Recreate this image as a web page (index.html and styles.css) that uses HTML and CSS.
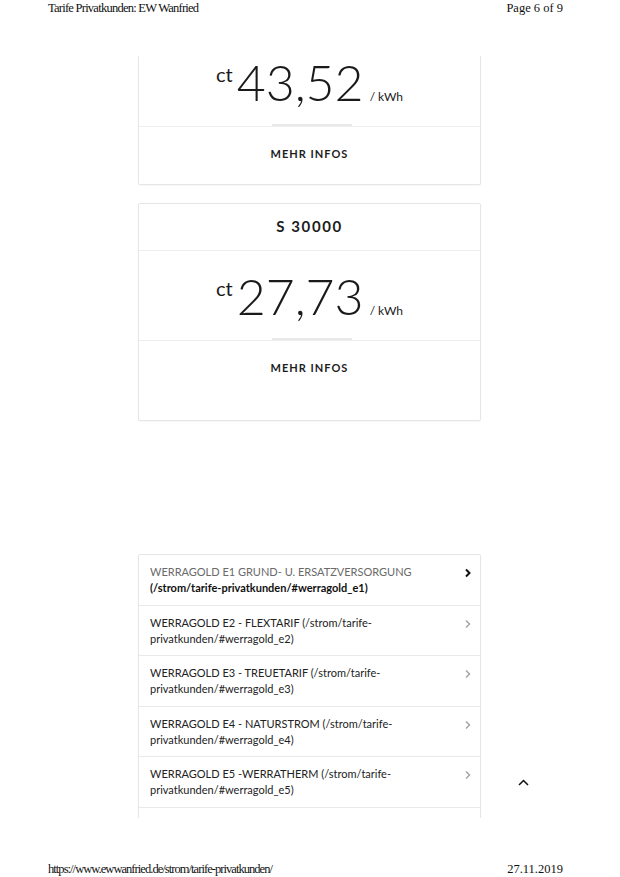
FILE: index.html
```html
<!DOCTYPE html>
<html lang="de">
<head>
<meta charset="utf-8">
<title>Tarife Privatkunden: EW Wanfried</title>
<link rel="stylesheet" href="styles.css">
</head>
<body>
<div class="sheet">
  <header class="print-head">
    <span class="narrow">Tarife Privatkunden: EW Wanfried</span>
    <span>Page 6 of 9</span>
  </header>

  <main class="content">
    <section class="card card-cut">
      <div class="price price-cut">
        <span class="cur">ct</span><span class="num">43,52</span><span class="unit">/ kWh</span>
      </div>
      <div class="more more-short">MEHR INFOS</div>
    </section>

    <section class="card">
      <div class="title">S 30000</div>
      <div class="price">
        <span class="cur">ct</span><span class="num">27,73</span><span class="unit">/ kWh</span>
      </div>
      <div class="more">MEHR INFOS</div>
    </section>

    <ul class="tariffs">
      <li class="tariff active">
        <span class="label"><span class="muted">WERRAGOLD E1 GRUND- U. ERSATZVERSORGUNG</span> <b class="url">(/strom/tarife-privatkunden/#werragold_e1)</b></span>
        <svg class="chev" width="8" height="10" viewBox="0 0 8 10"><path d="M2 1.5 L5.5 5 L2 8.5" fill="none" stroke="currentColor" stroke-width="2"/></svg>
      </li>
      <li class="tariff">
        <span class="label">WERRAGOLD E2 - FLEXTARIF (/strom/tarife-privatkunden/#werragold_e2)</span>
        <svg class="chev" width="8" height="10" viewBox="0 0 8 10"><path d="M2 1.5 L5.5 5 L2 8.5" fill="none" stroke="currentColor" stroke-width="1.5"/></svg>
      </li>
      <li class="tariff">
        <span class="label">WERRAGOLD E3 - TREUETARIF (/strom/tarife-privatkunden/#werragold_e3)</span>
        <svg class="chev" width="8" height="10" viewBox="0 0 8 10"><path d="M2 1.5 L5.5 5 L2 8.5" fill="none" stroke="currentColor" stroke-width="1.5"/></svg>
      </li>
      <li class="tariff">
        <span class="label">WERRAGOLD E4 - NATURSTROM (/strom/tarife-privatkunden/#werragold_e4)</span>
        <svg class="chev" width="8" height="10" viewBox="0 0 8 10"><path d="M2 1.5 L5.5 5 L2 8.5" fill="none" stroke="currentColor" stroke-width="1.5"/></svg>
      </li>
      <li class="tariff">
        <span class="label">WERRAGOLD E5 -WERRATHERM (/strom/tarife-privatkunden/#werragold_e5)</span>
        <svg class="chev" width="8" height="10" viewBox="0 0 8 10"><path d="M2 1.5 L5.5 5 L2 8.5" fill="none" stroke="currentColor" stroke-width="1.5"/></svg>
      </li>
      <li class="tariff">
        <span class="label">&nbsp;</span>
      </li>
    </ul>

    <a class="to-top" href="#" aria-label="Nach oben">
      <svg width="11" height="7" viewBox="0 0 11 7"><path d="M1 6 L5.5 1.5 L10 6" fill="none" stroke="#111" stroke-width="1.5"/></svg>
    </a>
  </main>

  <footer class="print-foot">
    <span class="narrow narrower">https://www.ewwanfried.de/strom/tarife-privatkunden/</span>
    <span>27.11.2019</span>
  </footer>
</div>
</body>
</html>
```

FILE: styles.css
```css
* { box-sizing: border-box; }

html, body {
  margin: 0;
  padding: 0;
  background: #fff;
}

.sheet {
  width: 620px;
  height: 877px;
  position: relative;
  overflow: hidden;
}

.print-head,
.print-foot {
  display: flex;
  justify-content: space-between;
  padding: 0 57px 0 48px;
  font-family: "Liberation Serif", "Times New Roman", serif;
  font-size: 12.5px;
  line-height: 16px;
  color: #111;
}

.narrow {
  letter-spacing: -0.75px;
}

.narrower {
  letter-spacing: -0.95px;
}

.print-head {
  height: 18px;
}

.print-foot {
  padding-top: 43px;
}

.content {
  height: 800px;
  overflow: hidden;
  position: relative;
  font-family: Lato, "Open Sans", sans-serif;
  color: #222;
}

.card {
  width: 343px;
  margin: 0 0 18px 138px;
  border: 1px solid #e6e6e6;
  border-radius: 2px;
  background: #fff;
  box-shadow: 0 1px 2px rgba(0, 0, 0, 0.04);
}

.card-cut {
  margin-top: 38px;
  border-top: none;
  border-top-left-radius: 0;
  border-top-right-radius: 0;
}

.title {
  padding: 13px 0 15px;
  font-size: 15px;
  line-height: 18px;
  font-weight: 700;
  letter-spacing: 1.6px;
  text-align: center;
  border-bottom: 1px solid #eeeeee;
  color: #1d1d1d;
}

.price {
  position: relative;
  display: flex;
  justify-content: center;
  align-items: baseline;
  padding: 20px 0 19px;
  border-bottom: 1px solid #eeeeee;
  color: #1a1a1a;
}

.price-cut {
  padding-top: 1px;
}

.price::after {
  content: "";
  position: absolute;
  left: 50%;
  bottom: 0;
  width: 80px;
  height: 2px;
  margin-left: -38px;
  background: #e9e9e9;
}

.cur {
  align-self: flex-start;
  font-size: 20px;
  line-height: 20px;
  margin-top: 7px;
  margin-right: 4px;
  font-weight: 400;
}

.num {
  font-size: 50px;
  line-height: 50px;
  font-weight: 300;
}

.unit {
  font-size: 12px;
  margin-left: 6px;
}

.more {
  padding: 20px 0 45px;
  font-size: 11px;
  line-height: 14px;
  font-weight: 700;
  letter-spacing: 1px;
  text-align: center;
  color: #1d1d1d;
}

.more-short {
  padding-bottom: 23px;
}

.tariffs {
  list-style: none;
  width: 343px;
  margin: 133px 0 0 138px;
  padding: 0;
  border: 1px solid #e6e6e6;
  border-radius: 2px;
  box-shadow: 0 1px 2px rgba(0, 0, 0, 0.04);
}

.tariff {
  display: flex;
  align-items: flex-start;
  justify-content: space-between;
  padding: 9px 8px 8.6px 11px;
  border-bottom: 1px solid #e9e9e9;
  font-size: 11px;
  line-height: 16px;
  color: #222;
}

.label {
  width: 300px;
}

.muted {
  color: #6a6a6a;
}

.url {
  font-weight: 700;
  color: #111;
}

.chev {
  margin-top: 4px;
  color: #a5a5a5;
}

.active .chev {
  color: #111;
}

.to-top {
  position: absolute;
  left: 518px;
  top: 761px;
  display: block;
  line-height: 0;
}
```
